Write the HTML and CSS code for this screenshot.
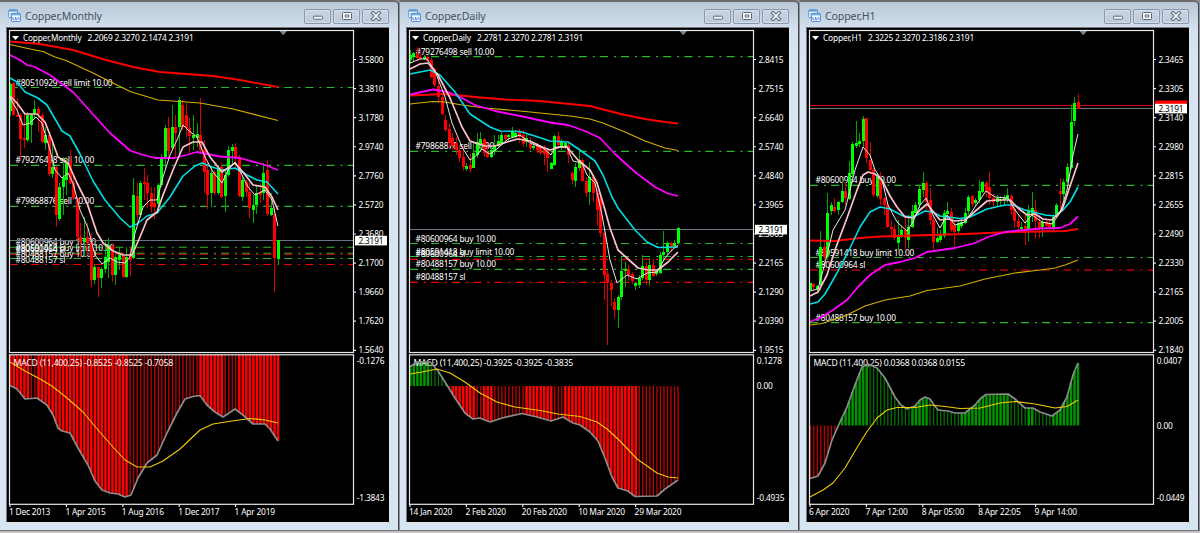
FILE: index.html
```html
<!doctype html>
<html lang="en">
    <head>
        <meta charset="UTF-8" />
        <meta name="viewport" content="width=device-width, initial-scale=1.0" />
        <title>Copper charts</title>
        <link rel="stylesheet" href="styles.css">
    </head>
    <body>
        <!-- Shared icons -->
        <svg class="defs" width="0" height="0">
            <symbol id="icon-chart" viewBox="0 0 13 13">
                <rect x="0.6" y="0.6" width="9" height="8" rx="1" fill="#f4f9ff" stroke="#5b9bd8" />
                <rect x="1" y="1" width="8" height="1.6" fill="#5b9bd8" />
                <path d="M2 6l1.5-2 1.5 2 1.5-2" fill="none" stroke="#5b9bd8" stroke-width="0.8" />
                <rect x="3.4" y="4.4" width="9" height="8" rx="1" fill="#f4f9ff" stroke="#3f83cc" />
                <rect x="4" y="5" width="8" height="1.4" fill="#7fb2e4" />
                <path d="M5 8v2.5h1.2M7.5 8v2.5h1.5v-2M10.8 8v2.5" fill="none" stroke="#3f83cc" stroke-width="0.9" />
            </symbol>
            <symbol id="icon-min" viewBox="0 0 12 10">
                <rect x="1.5" y="5.2" width="9" height="3" rx="1" fill="#fff" stroke="#5a6478" />
            </symbol>
            <symbol id="icon-max" viewBox="0 0 12 10">
                <rect x="1.5" y="1.5" width="9" height="7" rx="1" fill="#fff" stroke="#5a6478" />
                <rect x="4.3" y="4" width="3.4" height="2" fill="#fff" stroke="#5a6478" />
            </symbol>
            <symbol id="icon-close" viewBox="0 0 12 10">
                <path d="M3 2l6 6M9 2l-6 6" stroke="#5a6478" stroke-width="3.6" stroke-linecap="square" />
                <path d="M3 2l6 6M9 2l-6 6" stroke="#fff" stroke-width="1.6" stroke-linecap="square" />
            </symbol>
        </svg>

        <div class="workspace">
            <div class="window">
                <div class="titlebar">
                    <svg class="app-icon"><use href="#icon-chart" /></svg>
                    <span class="title">Copper,Monthly</span>
                    <button><svg><use href="#icon-min" /></svg></button>
                    <button><svg><use href="#icon-max" /></svg></button>
                    <button><svg><use href="#icon-close" /></svg></button>
                </div>
                <svg class="chart" id="monthly" viewBox="6 27 384 496"></svg>
            </div>

            <div class="window">
                <div class="titlebar">
                    <svg class="app-icon"><use href="#icon-chart" /></svg>
                    <span class="title">Copper,Daily</span>
                    <button><svg><use href="#icon-min" /></svg></button>
                    <button><svg><use href="#icon-max" /></svg></button>
                    <button><svg><use href="#icon-close" /></svg></button>
                </div>
                <svg class="chart" id="daily" viewBox="6 27 384 496"></svg>
            </div>

            <div class="window">
                <div class="titlebar">
                    <svg class="app-icon"><use href="#icon-chart" /></svg>
                    <span class="title">Copper,H1</span>
                    <button><svg><use href="#icon-min" /></svg></button>
                    <button><svg><use href="#icon-max" /></svg></button>
                    <button><svg><use href="#icon-close" /></svg></button>
                </div>
                <svg class="chart" id="h1" viewBox="6 27 384 496"></svg>
            </div>
        </div>

        <script src="charts.js"></script>
    </body>
</html>
```
FILE: styles.css
```css
body {
    margin: 0;
    background: #c3c1c3;
    font-family: "Noto Sans", "DejaVu Sans", sans-serif;
    overflow: hidden;
}

.defs {
    position: absolute;
}

.workspace {
    display: flex;
    gap: 1px;
    height: 531px;
    background: #8b8d90;
}

.window {
    box-sizing: border-box;
    width: 399px;
    height: 531px;
    flex: none;
    padding: 0 8px 0 6px;
    background: linear-gradient(#bac7d7 0, #d3e0ee 27px, #d7e4f2 60px);
    border-top: 2px solid #6b696c;
    border-right: 1px solid #44484c;
    border-bottom: 1px solid #6f7276;
    border-radius: 0 5px 0 0;
}

.titlebar {
    display: flex;
    align-items: center;
    height: 25px;
    padding: 4px 1px 0 2px;
    box-sizing: border-box;
}

.app-icon {
    width: 13px;
    height: 13px;
    margin-bottom: 2px;
}

.title {
    flex: 1;
    margin-left: 4px;
    color: #46515e;
    font-size: 10.6px;
    letter-spacing: -0.13px;
    line-height: 20px;
    position: relative;
    top: -1px;
}

button {
    display: flex;
    align-items: center;
    justify-content: center;
    box-sizing: border-box;
    width: 27px;
    height: 15px;
    margin: 0 0 1px 2px;
    padding: 0;
    background: linear-gradient(#c9d5e3, #bccada);
    border: 1px solid #8796ab;
    border-radius: 2px;
    box-shadow: inset 0 0 0 1px #d5dfeb;
}

button svg {
    width: 12px;
    height: 10px;
}

.chart {
    display: block;
    width: 384px;
    height: 496px;
    background: #000;
}

.chart text {
    fill: #fff;
    font-size: 8.4px;
    letter-spacing: -0.2px;
    white-space: pre;
}

.bevel {
    fill: none;
    stroke: #77797b;
}

.pane {
    fill: none;
    stroke: #e8e8e8;
    stroke-width: 1.2;
}

.level {
    stroke-width: 1.1;
    stroke-dasharray: 8 6 2 5.1;
}

.green {
    stroke: #2cb82c;
}

.red {
    stroke: #f00000;
}

.darkred {
    stroke: #b80000;
    stroke-width: 1.4;
}

.ask {
    stroke: #e00000;
}

.bid {
    stroke: #6b7685;
}

.candles {
    shape-rendering: crispEdges;
}

.line {
    fill: none;
    stroke-linejoin: round;
}

.slow {
    stroke: #f00;
    stroke-width: 1.9;
}

.gold {
    stroke: #d8b000;
    stroke-width: 1.1;
}

.magenta {
    stroke: #f0f;
    stroke-width: 1.8;
}

.cyan {
    stroke: #00dce4;
    stroke-width: 1.6;
}

.pink {
    stroke: #ffc0cb;
    stroke-width: 1.7;
}

.white {
    stroke: #e8e8e8;
    stroke-width: 1;
}

.macd {
    stroke: #8c8c8c;
    stroke-width: 1.7;
}

.signal {
    stroke: #f0cc00;
    stroke-width: 1.1;
}

.chart .price-chip {
    fill: #000;
}
```
FILE: charts.js
```js
const STEP = 3.523;
const FIRST = 10.3;

// candle: high low top bottom, g = up, r = down
const charts = {
    monthly: {
        header: "Copper,Monthly",
        ohlc: "2.2069 2.3270 2.1474 2.3191",
        ohlcX: 87.5,
        prices: "3.5800 3.3810 3.1780 2.9740 2.7760 2.5720 2.3680 2.1700 1.9660 1.7620 1.5640",
        times: ["1 Dec 2013", "1 Apr 2015", "1 Aug 2016", "1 Dec 2017", "1 Apr 2019"],
        bid: 240.5,
        levels: [
            [87.5, "green", "#80510929 sell limit 10.00"],
            [165.4, "green", "#79276498 sell 10.00"],
            [206.4, "green", "#79868876 sell 10.00"],
            [247.3, "green", "#80600964 buy 10.00"],
            [253.3, "green", "#80591418 buy limit 10.00"],
            [254.3, "red", "#80600964 sl"],
            [258.5, "green", "#80488157 buy 10.00"],
            [264.5, "red", "#80488157 sl"],
        ],
        candles: `83 116 84 111 g;82 116 83 115 r;98 117 115 117 r;113 160 115 139 r;113 148 138 140 r;112 142 115 140 g;
            113 143 115 125 g;100 118 109 114 g;106 132 109 114 r;113 143 115 142 r;127 150 135 143 g;135 176 135 174 r;
            140 178 167 174 g;166 227 167 215 r;183 221 187 219 g;157 215 177 187 g;157 195 162 180 g;150 184 162 183 r;
            173 200 183 198 r;197 240 198 237 r;223 257 237 242 r;217 257 238 242 g;223 255 237 243 r;233 287 242 280 r;
            264 284 267 280 g;267 297 267 278 r;267 288 269 278 g;240 273 257 269 g;238 278 245 262 g;243 282 246 275 r;
            255 285 257 275 g;247 270 255 260 g;252 278 256 277 r;247 278 257 277 g;247 276 255 260 r;178 259 195 258 g;
            183 223 196 215 r;181 218 183 215 g;168 200 182 184 r;175 208 183 193 r;187 212 193 207 r;187 219 203 207 r;
            183 213 185 204 g;154 187 158 185 g;125 168 128 159 g;117 160 128 151 r;105 150 127 148 g;115 157 127 133 r;
            97 157 100 127 g;100 130 105 127 r;103 137 115 128 r;118 153 128 136 r;115 150 135 138 g;123 147 134 138 g;
            98 153 135 150 r;140 193 150 172 r;163 209 170 195 r;167 207 173 193 g;170 195 172 193 r;165 195 168 193 g;
            163 198 167 197 r;170 212 175 196 g;146 177 150 175 g;144 165 147 151 g;143 167 147 157 r;155 197 157 196 r;
            177 201 180 197 g;180 197 182 192 r;182 218 192 208 r;195 223 205 210 g;185 214 193 205 g;183 203 192 195 r;
            163 200 173 193 g;160 216 170 214 r;193 216 208 215 g;207 292 214 258 r;240 265 240 259 g`,
        lines: {
            slow: "10,41.5 40,44 73,50 106,60 133,67 160,72 187,74 213,76 240,80 267,85 278,87",
            gold: "10,44.5 30,49 43,51.5 55,57 66,60.5 93,73 130,91.5 158,100 200,103 233,109 278,120.5",
            magenta: "10,55 20,60 27,65 35,67 50,75 73,92 90,111 110,133 130,150.5 140,154 155,158 175,158 197,152 220,156.5 240,158 265,165 278,170",
            cyan: "10,78 17,82 25,92 38,98 47,105 62,131 70,136 80,154 93,181 105,200 120,218 130,227 137,224 147,216 157,213 170,197 183,176 195,166 202,163 212,167 222,170 235,168 247,175 257,180 267,182 278,194",
            pink: "10,96 17,103 25,114 37,114 45,122 52,140 58,157 68,163 77,183 87,203 97,233 103,243 113,251 123,255 132,255 140,237 147,220 157,212 163,195 173,170 183,147 193,142 202,142 210,157 222,172 228,168 235,163 243,172 253,185 265,187 272,197 278,210",
            white: "10,98 17,110 23,125 30,123 36,117 42,123 50,150 55,170 62,178 68,173 73,183 80,210 88,228 95,255 102,264 110,258 117,262 125,263 130,257 135,233 143,207 150,200 157,200 163,177 170,155 177,140 183,125 188,130 197,137 205,157 213,172 222,183 228,170 235,162 242,175 248,187 255,195 265,190 272,200 278,226",
        },
        macdLabel: "MACD (11,400,25) -0.8525 -0.8525 -0.7058",
        macdAxis: [[360.5, "-0.1276"], [498, "-1.3843"]],
        zero: 355,
        macd: "10,385.5 17,389 25,399 37,398 47,405 53,415 58,428 62,431 70,433 78,448 88,465 95,481 102,490 110,493 118,494 125,497 131,495 138,478 147,463 157,455 167,433 177,413 185,399 193,396.5 200,395.5 207,405 215,412 223,417 235,409 243,415 253,424 265,424 270,429 278,441",
        signal: "10,362 25,371 40,379 52,386 67,398 83,412 98,430 113,447 125,460 137,467 150,467 163,461 180,449 200,430 213,424 232,421 250,418.5 265,420 278,423",
    },
    daily: {
        header: "Copper,Daily",
        ohlc: "2.2781 2.3270 2.2781 2.3191",
        ohlcX: 77,
        prices: "2.8415 2.7515 2.6640 2.5740 2.4840 2.3965 2.3065 2.2165 2.1290 2.0390 1.9515",
        times: ["14 Jan 2020", "2 Feb 2020", "20 Feb 2020", "10 Mar 2020", "29 Mar 2020"],
        bid: 229.5,
        levels: [
            [56.6, "green", "#79276498 sell 10.00"],
            [151.4, "green", "#79868876 sell 10.00"],
            [243.5, "green", "#80600964 buy 10.00"],
            [256.5, "green", "#80591418 buy limit 10.00"],
            [259.4, "red", "#80600964 sl"],
            [269.4, "green", "#80488157 buy 10.00"],
            [282.4, "red", "#80488157 sl"],
        ],
        candles: `50 64 55 60 g;52 62 53 57 g;47 62 54 58 r;50 60 57 59 r;55 60 57 59 g;55 62 57 61 r;
            58 78 60 77 r;67 87 69 85 r;75 103 86 97 r;90 115 97 114 r;115 132 120 130 r;123 147 129 143 r;
            133 150 138 146 r;137 155 143 150 r;145 162 150 158 r;147 171 157 167 r;163 171 166 169 g;153 173 165 169 r;
            142 168 153 168 g;133 158 142 155 g;132 150 139 144 g;138 157 139 153 r;143 158 152 157 r;147 158 150 157 g;
            135 155 146 151 g;135 147 141 146 g;132 144 135 143 g;134 143 135 139 r;134 141 135 137 g;127 138 132 137 g;
            130 139 133 137 g;129 143 132 137 r;130 147 135 144 r;133 147 138 142 g;137 150 144 148 r;142 150 146 148 g;
            143 153 145 150 r;145 155 147 153 r;145 165 149 154 r;148 172 150 158 r;162 169 163 169 g;135 166 136 165 g;
            132 149 136 145 r;139 150 142 147 g;142 149 143 147 g;143 163 145 155 r;171 184 173 180 r;163 187 167 181 g;
            152 171 160 168 g;158 182 160 181 r;177 197 181 193 r;162 205 177 192 g;175 202 177 193 r;190 226 193 210 r;
            195 237 198 233 r;230 300 233 275 r;270 345 274 283 r;280 306 283 290 r;298 318 302 310 r;295 328 297 310 g;
            257 300 271 297 g;262 287 269 271 g;265 280 269 275 r;272 284 274 281 r;282 290 283 286 g;275 288 278 285 g;
            255 280 266 278 g;262 285 266 280 r;258 286 265 280 g;259 277 265 276 r;270 276 271 274 g;252 274 255 273 g;
            231 260 252 255 g;241 256 243 252 g;242 252 243 247 r;240 247 243 246 g;227 245 228 243 g`,
        lines: {
            slow: "10,95.5 45,94 75,97 105,99.5 140,101 170,104 190,106 205,110 225,115 245,119 265,122 278,123.5",
            gold: "10,104 33,101.5 45,102 62,105 85,108 120,111 150,114 170,116 190,119 203,123 225,132 245,141 265,148 278,150.5",
            magenta: "10,94.5 33,89.5 48,92 60,97 75,105 95,111 125,117 150,122.5 168,125 185,131 200,138 215,154 235,172 255,187 268,193.5 278,196",
            cyan: "10,74 30,70 40,75 55,92 70,114 90,127 100,131 120,131.5 135,136 150,141 168,142 180,150 195,161 203,175 212,197 218,208 235,230 247,242 258,247.5 278,247",
            pink: "10,69 20,64 28,63 38,75 50,98 62,127 70,141 85,146 95,146 107,142 118,139 130,141 142,147 150,150 160,147 167,147 178,160 190,170 197,183 203,203 210,228 218,250 228,259 238,268 248,270 258,270 268,262 278,252",
            white: "10,63 20,59 27,59 35,71 45,97 52,123 62,147 70,160 77,155 82,149 90,154 97,149 108,139 120,135 130,143 143,148 151,155 155,147 167,147 173,161 182,163 187,175 195,183 202,215 210,260 217,283 227,275 237,279 247,273 257,272 265,258 272,250 278,245",
        },
        macdLabel: "MACD (11,400,25) -0.3925 -0.3925 -0.3835",
        macdAxis: [[360.5, "0.1278"], [386, "0.00"], [498, "-0.4935"]],
        zero: 386,
        macd: "10,366.7 17,362 30,362 38,371 45,382 55,398 65,413 73,419 80,418 90,422 102,418 122,413.5 137,417 151,421 163,417 173,423 180,425 190,432 198,441 205,458 212,477 218,488 228,491 235,496.5 257,496 265,489 278,480",
        signal: "10,374 22,372 37,369 50,373 65,382 80,393 97,402 115,407 140,410.5 158,414 180,416.5 197,422 207,429 220,441 237,459 257,473 268,477 278,478",
    },
    h1: {
        header: "Copper,H1",
        ohlc: "2.3225 2.3270 2.3186 2.3191",
        ohlcX: 68,
        prices: "2.3465 2.3305 2.3140 2.2980 2.2815 2.2655 2.2490 2.2330 2.2165 2.2005 2.1840",
        times: ["6 Apr 2020", "7 Apr 12:00", "8 Apr 05:00", "8 Apr 22:05", "9 Apr 14:00"],
        bid: 108.5,
        ask: 105.5,
        levels: [
            [185.4, "green", "#80600964 buy 10.00"],
            [257.5, "green", "#80591418 buy limit 10.00"],
            [270, "darkred", "#80600964 sl"],
            [322.6, "green", "#80488157 buy 10.00"],
        ],
        candles: `283 290 283 290 g;283 290 284 287 r;285 294 286 289 g;231 290 247 285 g;240 262 247 257 r;193 260 213 257 g;
            202 215 205 211 g;198 213 207 211 r;201 215 202 210 g;180 203 191 202 g;182 205 191 198 r;161 200 173 199 g;
            142 178 144 174 g;121 148 143 146 g;133 147 141 144 g;116 147 119 141 g;118 163 118 158 r;142 173 160 170 r;
            168 197 170 195 r;173 198 177 196 g;172 205 177 199 r;197 215 198 205 r;203 228 205 227 r;220 237 227 229 r;
            225 240 229 238 r;220 250 237 243 g;226 238 230 237 g;218 250 230 238 r;215 248 227 240 g;205 228 211 227 g;
            202 213 205 213 g;185 208 189 205 g;172 197 183 190 g;181 210 183 202 r;188 225 200 220 r;215 252 220 242 r;
            228 243 238 242 g;230 243 235 240 g;210 238 213 236 g;202 220 211 214 g;208 232 212 230 r;222 246 225 232 r;
            220 233 223 231 g;218 228 222 226 g;208 224 213 223 g;195 215 197 211 g;195 207 196 204 r;198 206 200 203 g;
            180 203 191 200 g;181 193 182 192 g;181 197 183 192 r;172 205 187 198 r;194 207 198 202 r;195 206 198 202 g;
            196 207 199 201 g;195 206 198 200 g;188 203 195 199 g;194 215 196 210 r;207 228 209 221 r;215 230 221 227 r;
            222 233 227 229 g;215 245 226 231 r;205 241 210 230 g;192 222 208 215 g;200 239 210 221 r;215 238 222 228 r;
            218 237 222 227 g;219 229 222 226 r;220 231 223 227 r;214 230 217 228 g;203 218 205 216 g;178 212 191 194 r;
            179 200 182 194 g;163 183 167 182 g;105 170 122 168 g;97 126 103 121 g;94 109 102 109 r`,
        lines: {
            slow: "10,240.5 35,241 60,238 80,236.5 130,235 165,234 200,232.5 240,231.5 265,231 278,229",
            gold: "10,325 22,323.5 45,316 65,306 85,300 110,296 127,290.5 160,286 185,279 215,273 240,270 255,268 265,265 278,260",
            magenta: "10,321.5 20,318 33,310 47,300 58,287 70,275 85,265 100,262 115,258 127,252 155,248 175,243 188,237 205,232 220,230.5 240,228.5 260,228 270,224 278,216.5",
            cyan: "10,304 18,302 25,294 37,273 50,248 60,227 70,212 80,207 90,209 103,216 113,217 125,211 133,212 140,216 160,218.5 170,217 187,209 205,205 213,205 225,210 245,215 255,216 263,210 270,202 278,187",
            pink: "10,296 18,292 27,275 35,250 47,218 57,190 63,175 68,172 75,174 82,180 90,196 97,207 105,217 113,218 120,210 127,204 132,210 140,220 148,219 155,221 165,220 172,214 187,201 197,200 210,200 218,208 227,215 235,214 243,219 252,220 262,210 268,192 278,163",
            white: "10,291 18,289 25,263 33,230 45,210 55,170 63,147 70,155 75,170 82,180 88,205 97,222 107,231 113,222 120,205 126,198 133,215 140,228 147,215 155,225 165,222 175,207 186,191 195,197 208,198 215,210 225,223 232,215 242,222 252,224 260,213 267,190 273,155 278,134",
        },
        macdLabel: "MACD (11,400,25) 0.0368 0.0368 0.0155",
        macdAxis: [[360.5, "0.0407"], [426, "0.00"], [498, "-0.0449"]],
        zero: 425.5,
        macd: "10,478.5 18,476 25,463 32,440 40,422 47,407 55,385 62,367 68,364 77,368 85,378 95,397 101,405 107,409 115,406 120,400 125,397 130,399 134,405 138,410 148,411 155,413 165,413 175,405 180,399 186,394.5 208,394 215,399 225,408 233,408 240,412 252,416 260,410 267,397 273,375 278,363",
        signal: "10,497 23,490 33,483 45,468 55,451 66,433 77,418 87,410 97,407.5 115,407.5 130,405 145,406.5 160,408.5 180,408 200,403 215,401.5 235,404 255,408 267,406.5 278,400",
    },
};

function text(x, y, str, width, cls) {
    const fit = width ? ` textLength="${width}" lengthAdjust="spacingAndGlyphs"` : "";
    return `<text x="${x}" y="${y + 3}"${fit} class="${cls || ""}">${str}</text>`;
}

function hline(y, cls) {
    return `<line x1="10" x2="353" y1="${y}" y2="${y}" class="${cls}" />`;
}

// y of a polyline at the given x
function valueAt(points, x) {
    for (let i = 1; i < points.length; i++) {
        const [x0, y0] = points[i - 1];
        const [x1, y1] = points[i];
        if (x <= x1) return y0 + ((y1 - y0) * (x - x0)) / (x1 - x0);
    }
    return points[points.length - 1][1];
}

function drawCandles(data) {
    return data.split(";").map((row, i) => {
        const [high, low, top, bottom, dir] = row.trim().split(" ");
        const x = Math.round(FIRST + i * STEP - 0.5);
        const wick = dir === "g" ? "#00a800" : "#d80000";
        const body = dir === "g" ? "#00ff00" : "#ff0000";
        return `<rect x="${x}" y="${high}" width="1" height="${low - high}" fill="${wick}" />
            <rect x="${x - 1}" y="${top}" width="3" height="${bottom - top}" fill="${body}" />`;
    }).join("");
}

function drawBars(chart) {
    const points = chart.macd.split(" ").map((p) => p.split(",").map(Number));
    let out = "";
    for (let i = 0; i < 77; i++) {
        const x = FIRST + i * STEP;
        const y = valueAt(points, x);
        const prev = valueAt(points, Math.max(10, x - STEP));
        const growing = Math.abs(y - chart.zero) >= Math.abs(prev - chart.zero);
        const up = y < chart.zero;
        const color = up ? (growing ? "#009400" : "#007000") : (growing ? "#ff0000" : "#c00000");
        const width = growing ? 2.5 : 1.3;
        const top = Math.min(y, chart.zero);
        out += `<rect x="${(x - width / 2).toFixed(2)}" y="${top}" width="${width}" height="${Math.abs(y - chart.zero)}" fill="${color}" />`;
    }
    return out;
}

function draw(id) {
    const c = charts[id];
    let out = `<path class="bevel" d="M6.5 523V27.5H390" /><path d="M389.5 27V522.5H6" fill="none" stroke="#e4e4e4" />`;

    c.levels.forEach(([y, cls, label]) => {
        out += hline(y, "level " + cls) + text(15.5, y - 5, label);
    });
    out += drawBars(c);
    out += hline(c.bid, "bid");
    if (c.ask) out += hline(c.ask, "ask");
    out += `<g class="candles">${drawCandles(c.candles)}</g>`;
    for (const name in c.lines) {
        out += `<polyline class="line ${name}" points="${c.lines[name]}" />`;
    }
    out += text(13.5, 362.5, c.macdLabel, c.macdLabel.length > 38 ? 159.5 : 151.5);
    out += `<polyline class="line macd" points="${c.macd}" /><polyline class="line signal" points="${c.signal}" />`;

    out += `<path d="M12 36h7l-3.5 4z" fill="#fff" /><path d="M279.5 31h7.5l-3.7 4.2z" fill="#74818f" />`;
    out += text(23, 37.5, c.header, c.ohlcX - 29) + text(c.ohlcX, 37.5, c.ohlc, 106);
    out += `<rect class="pane" x="9.5" y="30.5" width="344" height="322" /><rect class="pane" x="9.5" y="354.8" width="344" height="149.5" />`;

    // price and time scales
    c.prices.split(" ").forEach((p, i) => {
        const y = 59.5 + i * 29.08;
        out += `<path class="pane" d="M354 ${y}h2" />` + text(358.5, y, p, 24.7);
    });
    if (c.ask) out += `<rect x="355" y="100.5" width="32" height="6" fill="#f00" />`;
    out += `<rect x="355" y="${c.bid - 4.7}" width="32" height="9.6" fill="#fff" />` + text(358.5, c.bid, "2.3191", 24.7, "price-chip");
    c.macdAxis.forEach(([y, label]) => {
        out += text(356.8, y, label);
    });
    c.times.forEach((t, i) => {
        const x = 10 + i * 56.4;
        out += `<path class="pane" d="M${x} 504v3" />` + text(x - 1, 512.3, t);
    });

    document.getElementById(id).innerHTML = out;
}

Object.keys(charts).forEach(draw);
```
